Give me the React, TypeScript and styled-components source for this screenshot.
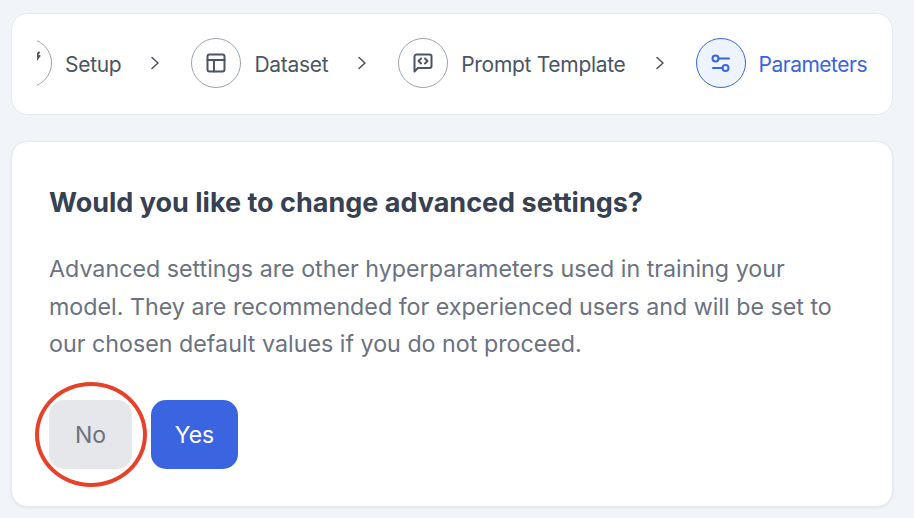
import React from "react";
import styled, { createGlobalStyle } from "styled-components";

const GlobalStyle = createGlobalStyle`
  html, body {
    margin: 0;
    height: 100%;
    background: #f1f4f9;
    overflow: hidden;
  }
  body {
    font-family: Inter, "Liberation Sans", sans-serif;
  }
`;

const Page = styled.div`
  display: flex;
  flex-direction: column;
  gap: 26px;
  width: 882px;
  padding: 13px 0 0 11px;
`;

const Panel = styled.div`
  background: #fff;
  border: 1px solid #e6e9ee;
  border-radius: 16px;
  box-sizing: border-box;
`;

const StepperCard = styled(Panel)`
  height: 102px;
  padding: 0 25px 2px;
  display: flex;
  align-items: center;
`;

const StepList = styled.div`
  flex: 1;
  min-width: 0;
  overflow: hidden;
  display: flex;
  align-items: center;
  justify-content: flex-end;
`;

const Step = styled.div`
  flex: none;
  display: flex;
  align-items: center;
  gap: 13px;
`;

const StepCircle = styled.div<{ $active?: boolean }>`
  flex: none;
  width: 50px;
  height: 50px;
  box-sizing: border-box;
  border-radius: 50%;
  border: 1px solid ${(p) => (p.$active ? "#3a64e0" : "#9ca3af")};
  background: ${(p) => (p.$active ? "#edf4fe" : "#fff")};
  color: ${(p) => (p.$active ? "#3a64e0" : "#4b5563")};
  display: flex;
  align-items: center;
  justify-content: center;
  svg {
    overflow: visible;
  }
`;

const StepLabel = styled.span<{ $active?: boolean }>`
  font-size: 21px;
  letter-spacing: ${(p) => (p.$active ? "-0.5px" : "-0.3px")};
  line-height: 30px;
  margin-top: 4px;
  white-space: nowrap;
  color: ${(p) => (p.$active ? "#3a64e0" : "#4b5563")};
`;

const Chevron = styled.svg`
  flex: none;
  width: 12px;
  height: 14px;
  margin: 0 30px 0 28px;
  color: #4b5563;
`;

const QuestionCard = styled(Panel)`
  height: 366px;
  padding: 43px 37px 0;
  box-shadow: 0 1px 3px rgba(30, 40, 60, 0.08);
`;

const Title = styled.h2`
  margin: 0;
  font-size: 27px;
  line-height: 36px;
  font-weight: 700;
  color: #374151;
`;

const Description = styled.p`
  margin: 29px 0 0;
  width: 810px;
  font-size: 23.25px;
  line-height: 37.5px;
  color: #6b7280;
`;

const Buttons = styled.div`
  display: flex;
  gap: 19px;
  margin-top: 37px;
`;

const ChoiceWrap = styled.div`
  position: relative;
`;

const Choice = styled.button<{ $primary?: boolean }>`
  height: 69px;
  width: ${(p) => (p.$primary ? "87px" : "83px")};
  border: 0;
  border-radius: 15px;
  padding: 2px 0 0;
  font-family: inherit;
  font-size: 23px;
  background: ${(p) => (p.$primary ? "#3a64e0" : "#e5e7eb")};
  color: ${(p) => (p.$primary ? "#fff" : "#6b7280")};
`;

const Highlight = styled.div`
  position: absolute;
  left: -14px;
  top: -18px;
  width: 112px;
  height: 105px;
  box-sizing: border-box;
  border: 4px solid #e8412a;
  border-radius: 50%;
  pointer-events: none;
`;

const SetupIcon = () => (
  <svg width="24" height="24" viewBox="0 0 24 24" fill="none" stroke="currentColor" strokeWidth="2" strokeLinecap="round" strokeLinejoin="round">
    <path d="M24 1.5 21 5h3.5l-3 4" />
    <path d="M4 21 15 10" />
  </svg>
);

const TableIcon = () => (
  <svg width="24" height="24" viewBox="0 0 24 24" fill="none" stroke="currentColor" strokeWidth="2" strokeLinecap="round" strokeLinejoin="round">
    <rect x="3.5" y="3.5" width="17" height="17" rx="2" />
    <path d="M3.5 9h17M10 9v11.5" />
  </svg>
);

const PromptIcon = () => (
  <svg width="24" height="24" viewBox="0 0 24 24" fill="none" stroke="currentColor" strokeWidth="2" strokeLinecap="round" strokeLinejoin="round">
    <path d="M3.5 20.5V5.5a2 2 0 0 1 2-2h13a2 2 0 0 1 2 2v9.5a2 2 0 0 1-2 2H7l-3.5 3.5Z" />
    <path d="m10 7.5-2.5 2.5 2.5 2.5M14 7.5l2.5 2.5-2.5 2.5" />
  </svg>
);

const SlidersIcon = () => (
  <svg width="24" height="24" viewBox="0 0 24 24" fill="none" stroke="currentColor" strokeWidth="2" strokeLinecap="round">
    <circle cx="6.5" cy="7.5" r="3" />
    <path d="M9.5 7.5H20" />
    <circle cx="16.5" cy="17" r="3" />
    <path d="M4 17h9.5" />
  </svg>
);

const Arrow = () => (
  <Chevron viewBox="0 0 12 14" fill="none" stroke="currentColor" strokeWidth="1.6" strokeLinecap="round" strokeLinejoin="round">
    <path d="m3 1.5 6 5.5-6 5.5" />
  </Chevron>
);

const steps = [
  { label: "Setup", icon: <SetupIcon /> },
  { label: "Dataset", icon: <TableIcon /> },
  { label: "Prompt Template", icon: <PromptIcon /> },
  { label: "Parameters", icon: <SlidersIcon />, active: true },
];

export default function App() {
  return (
    <>
      <GlobalStyle />
      <Page>
        <StepperCard>
          <StepList>
            {steps.map((step, i) => (
              <React.Fragment key={step.label}>
                {i > 0 && <Arrow />}
                <Step>
                  <StepCircle $active={step.active}>{step.icon}</StepCircle>
                  <StepLabel $active={step.active}>{step.label}</StepLabel>
                </Step>
              </React.Fragment>
            ))}
          </StepList>
        </StepperCard>
        <QuestionCard>
          <Title>Would you like to change advanced settings?</Title>
          <Description>
            Advanced settings are other hyperparameters used in training your
            model. They are recommended for experienced users and will be set to
            our chosen default values if you do not proceed.
          </Description>
          <Buttons>
            <ChoiceWrap>
              <Choice>No</Choice>
              <Highlight />
            </ChoiceWrap>
            <Choice $primary>Yes</Choice>
          </Buttons>
        </QuestionCard>
      </Page>
    </>
  );
}
